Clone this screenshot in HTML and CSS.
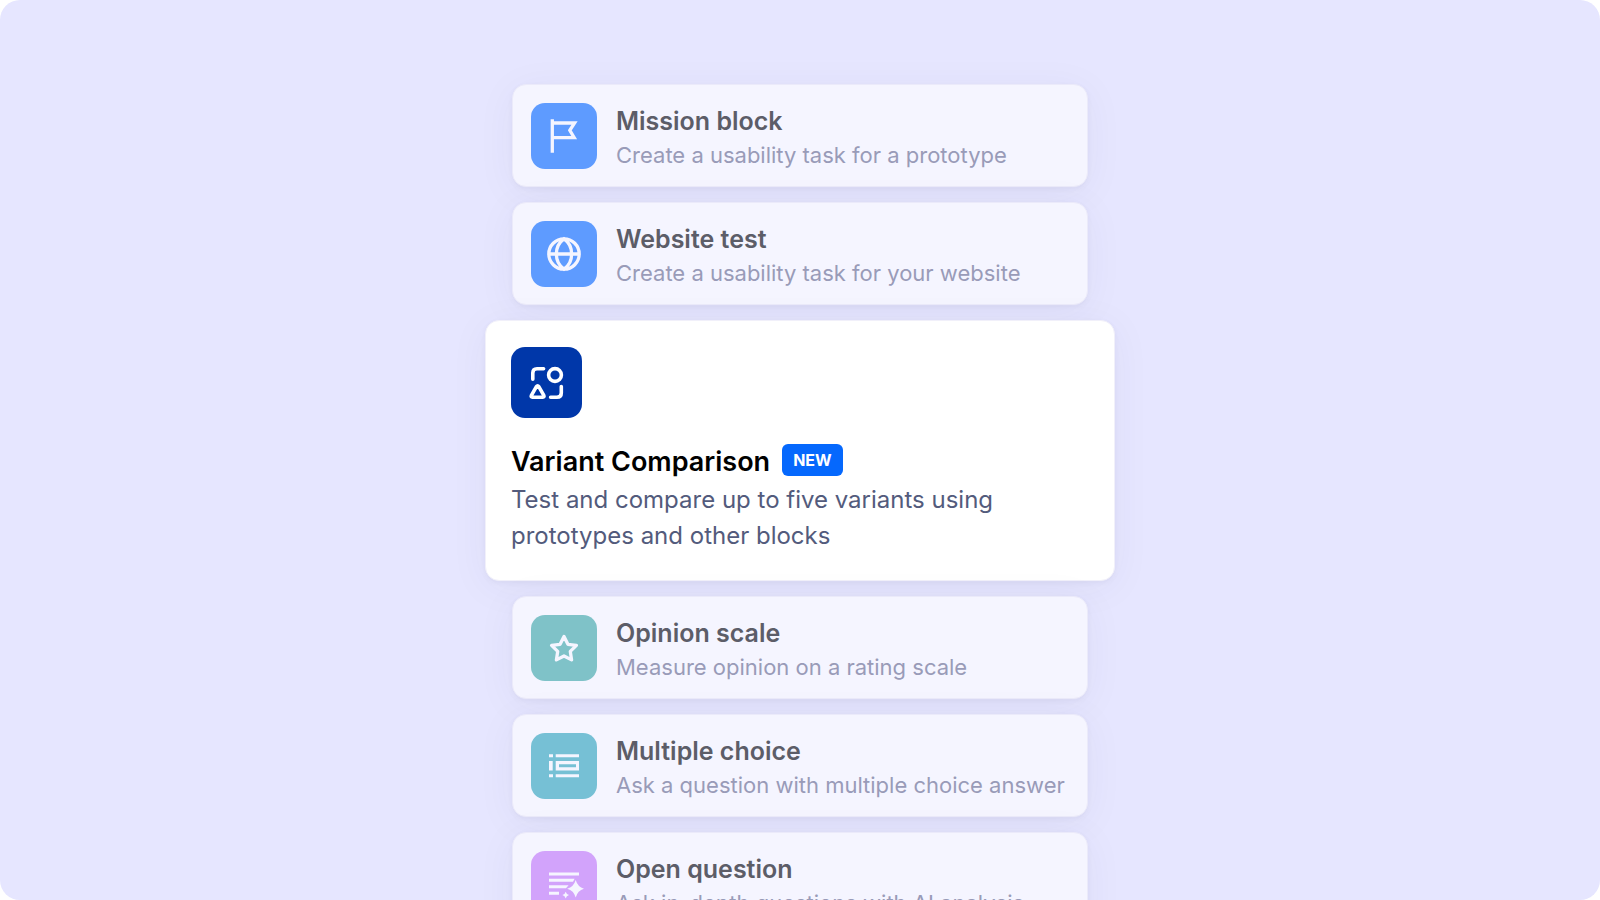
FILE: index.html
```html
<!DOCTYPE html>
<html lang="en">
<head>
<meta charset="utf-8">
<meta name="viewport" content="width=device-width, initial-scale=1">
<title>Blocks</title>
<link rel="stylesheet" href="styles.css">
</head>
<body>
<main class="stage">
  <ul class="blocks">
    <li class="card">
      <svg class="tile tile-blue" viewBox="0 0 66 66" aria-hidden="true"><path d="M21.3 16.3V49.7M21.3 20H43.6L38.8 27.3L43.2 34.7H21.3"/></svg>
      <div class="text">
        <h2 class="title">Mission block</h2>
        <p class="desc">Create a usability task for a prototype</p>
      </div>
    </li>
    <li class="card">
      <svg class="tile tile-blue" viewBox="0 0 66 66" aria-hidden="true"><circle cx="33" cy="33" r="15.2"/><path d="M17.8 33H48.2M33 17.8C22.8 25 22.8 41 33 48.2C43.2 41 43.2 25 33 17.8Z"/></svg>
      <div class="text">
        <h2 class="title">Website test</h2>
        <p class="desc">Create a usability task for your website</p>
      </div>
    </li>
    <li class="card featured">
      <svg class="tile tile-navy" viewBox="0 0 71 71" aria-hidden="true"><path d="M21.8 32.3V26Q21.8 21.8 26 21.8H32.6M50.3 39.6V46Q50.3 50.2 46 50.2H39.6M25.4 39.6L20.4 48.4Q19.6 50.2 21.4 50.2H31.8Q33.6 50.2 32.8 48.4L27.8 39.6Q26.6 38 25.4 39.6Z"/><circle cx="44" cy="28" r="6.4"/></svg>
      <div class="text">
        <div class="heading">
          <h2 class="title">Variant Comparison</h2>
          <span class="badge">NEW</span>
        </div>
        <p class="desc">Test and compare up to five variants using prototypes and other blocks</p>
      </div>
    </li>
    <li class="card">
      <svg class="tile tile-teal" viewBox="0 0 66 66" aria-hidden="true"><path stroke-linejoin="round" d="M33 21.4L36.9 29.3L45.4 30.4L39.3 36.4L40.6 44.9L33 41L25.4 44.9L26.7 36.4L20.6 30.4L29.1 29.3Z"/></svg>
      <div class="text">
        <h2 class="title">Opinion scale</h2>
        <p class="desc">Measure opinion on a rating scale</p>
      </div>
    </li>
    <li class="card">
      <svg class="tile tile-cyan" viewBox="0 0 66 66" aria-hidden="true"><path class="solid" fill-rule="evenodd" d="M18 21.3h4v3h-4zM24.7 21.3H48v3H24.7zM18 28h3.7v9.4H18zM24.7 28H48v9.4H24.7zM28 31.2v3H45v-3zM18 41.3h4v3h-4zM24.7 41.3H48v3H24.7z"/></svg>
      <div class="text">
        <h2 class="title">Multiple choice</h2>
        <p class="desc">Ask a question with multiple choice answer</p>
      </div>
    </li>
    <li class="card">
      <svg class="tile tile-purple" viewBox="0 0 66 66" aria-hidden="true"><path class="solid" d="M18 21.4H48v3H18zM18 27.8H43.6L42 30.8H18zM18 34.3H37.6L35 37.3H18zM18 40.7H28v3H18zM44.7 29Q46.6 35.8 53 37.7Q46.6 39.6 44.7 46.4Q42.8 39.6 36.2 37.7Q42.8 35.8 44.7 29ZM34.7 40.8Q35.4 43.4 38 44.1Q35.4 44.8 34.7 47.4Q34 44.8 31.4 44.1Q34 43.4 34.7 40.8Z"/></svg>
      <div class="text">
        <h2 class="title">Open question</h2>
        <p class="desc">Ask in-depth questions with AI analysis</p>
      </div>
    </li>
  </ul>
</main>
</body>
</html>
```
FILE: styles.css
```css
* {
  box-sizing: border-box;
}

body {
  margin: 0;
  background: #fff;
  font-family: Inter, "Liberation Sans", sans-serif;
}

.stage {
  height: 100vh;
  padding: 84px 24px 0;
  overflow: hidden;
  border-radius: 20px;
  background: #e6e6ff;
}

.blocks {
  display: flex;
  flex-direction: column;
  gap: 15px;
  max-width: 630px;
  margin: 0 auto;
  padding: 0;
  list-style: none;
}

.card {
  display: flex;
  align-items: flex-start;
  gap: 19px;
  margin: 0 27px;
  padding: 18px 18px 14px;
  border: 1px solid #ebeafa;
  border-radius: 14px;
  background: #f5f5ff;
  box-shadow: 0 2px 5px rgba(60, 50, 90, 0.05), 0 6px 40px rgba(60, 50, 90, 0.05);
}

.tile {
  display: block;
  flex: none;
  width: 66px;
  height: 66px;
  border-radius: 14px;
  fill: none;
  stroke: #f5f5ff;
  stroke-width: 3.3;
}

.solid {
  fill: #f5f5ff;
  stroke: none;
}

.tile-blue {
  background: #5e9bff;
}

.tile-teal {
  background: #7fc2c8;
}

.tile-cyan {
  background: #76c0d5;
}

.tile-purple {
  background: #d2a3fb;
}

.text {
  min-width: 0;
}

.title {
  margin: 0;
  color: #5c5d68;
  font-size: 25px;
  font-weight: 600;
  line-height: 36px;
}

.desc {
  margin: 0;
  color: #999bb8;
  font-size: 22px;
  font-weight: 400;
  line-height: 33px;
}

.featured {
  flex-direction: column;
  gap: 26px;
  margin: 0;
  padding: 26px 25px;
  border-color: #f1f0fa;
  background: #fff;
}

.featured .tile {
  width: 71px;
  height: 71px;
  stroke: #fff;
  stroke-width: 3.6;
  stroke-linecap: round;
  stroke-linejoin: round;
}

.tile-navy {
  background: #0037a9;
}

.heading {
  display: flex;
  align-items: flex-start;
  gap: 12px;
  margin-bottom: 2px;
}

.featured .title {
  color: #000;
  font-size: 27px;
  line-height: 36px;
}

.featured .desc {
  max-width: 500px;
  color: #535b7c;
  font-size: 24px;
  line-height: 36px;
}

.badge {
  padding: 0 11px;
  border-radius: 6px;
  background: #0568fd;
  color: #fff;
  font-size: 16px;
  font-weight: 700;
  line-height: 32px;
}
```
